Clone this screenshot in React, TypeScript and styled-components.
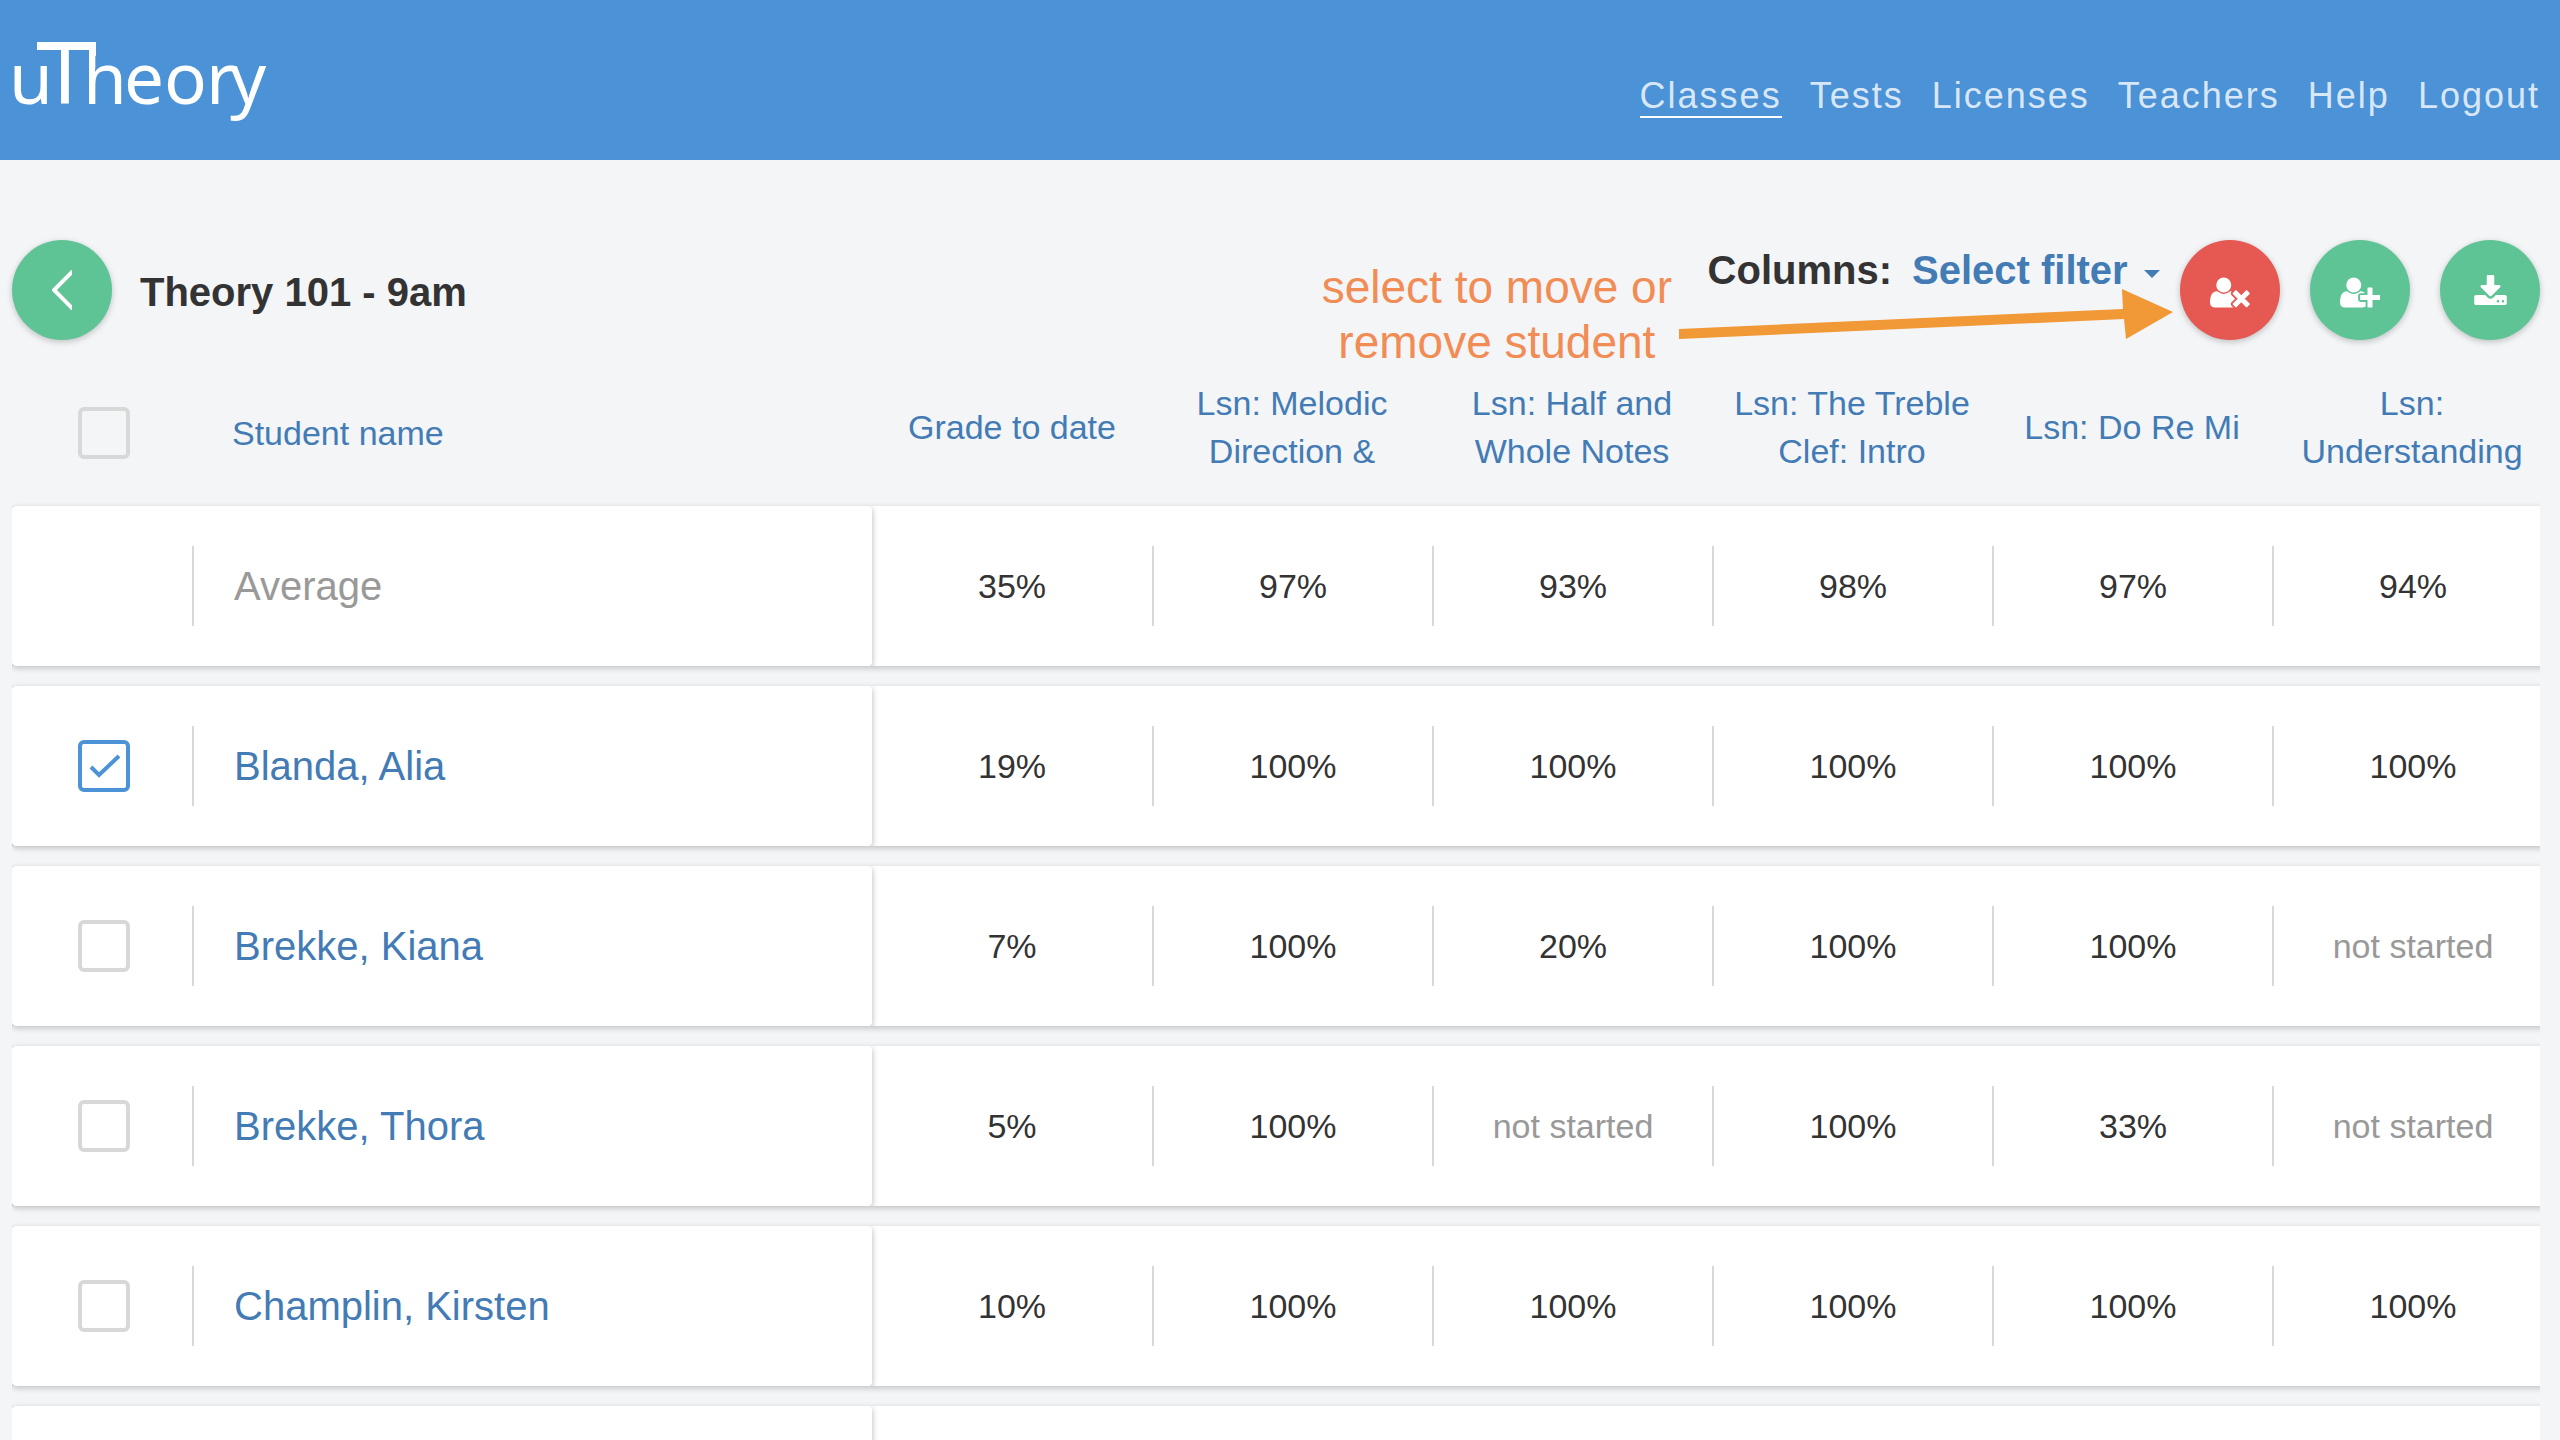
import React, { useState } from "react";
import styled, { createGlobalStyle, css } from "styled-components";

const blue = "#4b92d7";
const link = "#437bb5";
const ink = "#333333";
const muted = "#999999";
const green = "#5fc495";
const red = "#e65952";
const line = "#d8d8d8";

const GlobalStyle = createGlobalStyle`
  *, *::before, *::after { box-sizing: border-box; }
  body {
    margin: 0;
    background: #f3f5f7;
    color: ${ink};
    font-family: "Liberation Sans", Arial, sans-serif;
  }
  button, select, input { font: inherit; margin: 0; }
`;

const Page = styled.div`
  height: 100vh;
  overflow: hidden;
`;

const Header = styled.header`
  display: flex;
  justify-content: space-between;
  align-items: flex-end;
  height: 160px;
  padding: 0 20px 0 0;
  background: ${blue};
`;

const LogoLink = styled.a`
  display: block;
  height: 160px;
`;

const Nav = styled.nav`
  display: flex;
  gap: 28px;
  padding-bottom: 42px;
`;

const NavLink = styled.a<{ $active?: boolean }>`
  border-bottom: 2px solid ${(p) => (p.$active ? "#ffffff" : "transparent")};
  color: rgba(255, 255, 255, 0.8);
  font-size: 36px;
  line-height: 40px;
  letter-spacing: 2px;
  text-decoration: none;
`;

const Toolbar = styled.section`
  position: relative;
  display: flex;
  justify-content: space-between;
  margin-top: 80px;
  padding: 0 20px 0 12px;
`;

const TitleGroup = styled.div`
  display: flex;
  align-items: center;
  gap: 28px;
`;

const Title = styled.h1`
  margin: 0;
  padding-top: 4px;
  font-size: 40px;
  line-height: 60px;
`;

const Actions = styled.div`
  display: flex;
  align-items: flex-start;
  gap: 20px;
`;

const ButtonGroup = styled.div`
  display: flex;
  gap: 30px;
`;

const RoundButton = styled.button<{ $tone: string; $drop?: boolean }>`
  display: flex;
  align-items: center;
  justify-content: center;
  width: 100px;
  height: 100px;
  padding: ${(p) => (p.$drop ? "4px 0 0" : "0")};
  border: 0;
  border-radius: 50%;
  background: ${(p) => p.$tone};
  color: #ffffff;
  box-shadow: 0 2px 6px rgba(0, 0, 0, 0.22);
  cursor: pointer;
`;

const FilterLabel = styled.label`
  display: flex;
  align-items: center;
  gap: 20px;
  font-size: 40px;
  font-weight: bold;
  line-height: 60px;
`;

const FilterBox = styled.span`
  display: flex;
  align-items: center;
  gap: 16px;
`;

const FilterSelect = styled.select`
  appearance: none;
  height: 60px;
  padding: 0;
  border: 0;
  background: transparent;
  color: ${link};
  cursor: pointer;
`;

const Caret = styled.span`
  margin-top: 8px;
  border: 8px solid transparent;
  border-top-color: ${link};
  border-bottom: 0;
`;

const Note = styled.p`
  position: absolute;
  top: 20px;
  right: 888px;
  margin: 0;
  color: #f28c55;
  font-size: 46px;
  line-height: 55px;
  text-align: center;
`;

const Arrow = styled.svg`
  position: absolute;
  top: 48px;
  right: 386px;
`;

const TableScroller = styled.div`
  margin: 28px 20px 0 12px;
  overflow: hidden;
`;

const Table = styled.table`
  display: block;
`;

const TableHead = styled.thead`
  display: block;
`;

const TableBody = styled.tbody`
  display: flex;
  flex-direction: column;
  gap: 20px;
  padding: 20px 0;
`;

const columns = css`
  display: grid;
  grid-template-columns: 860px repeat(6, minmax(280px, 1fr));
`;

const HeadRow = styled.tr`
  ${columns}
  height: 118px;
`;

const Row = styled.tr`
  ${columns}
  height: 160px;
  min-width: 2540px;
  border-radius: 4px;
  background: #ffffff;
  box-shadow: 0 2px 6px rgba(0, 0, 0, 0.22);
`;

const HeadNameCell = styled.th`
  display: flex;
  align-items: center;
  padding: 12px 0 0;
  font-weight: normal;
`;

const HeadCell = styled.th`
  display: flex;
  align-items: center;
  justify-content: center;
  padding: 0 10px;
  font-weight: normal;
`;

const SortButton = styled.button`
  padding: 0;
  border: 0;
  background: none;
  color: ${link};
  font-size: 34px;
  line-height: 48px;
  text-align: center;
  cursor: pointer;
`;

const NameCell = styled.th`
  display: flex;
  align-items: center;
  padding: 0;
  border-radius: 4px;
  font-size: 40px;
  font-weight: normal;
  line-height: 60px;
  box-shadow: 0 2px 6px rgba(0, 0, 0, 0.3);
  clip-path: inset(0 -10px 0 0);
`;

const Slot = styled.span<{ $divided?: boolean }>`
  display: flex;
  align-items: center;
  width: ${(p) => (p.$divided ? "182px" : "180px")};
  height: 80px;
  margin-right: 40px;
  padding-left: 66px;
  border-right: ${(p) => (p.$divided ? `2px solid ${line}` : "0")};
`;

const StudentLink = styled.a`
  color: ${link};
  text-decoration: none;
`;

const AverageLabel = styled.span`
  color: ${muted};
`;

const Cell = styled.td<{ $muted?: boolean; $first?: boolean }>`
  display: flex;
  align-items: center;
  justify-content: center;
  height: 80px;
  margin: 40px 0;
  padding: 0;
  border-left: ${(p) => (p.$first ? "0" : `2px solid ${line}`)};
  color: ${(p) => (p.$muted ? muted : ink)};
  font-size: 34px;
`;

const CheckWrap = styled.span`
  position: relative;
  display: block;
  width: 52px;
  height: 52px;
`;

const CheckInput = styled.input`
  appearance: none;
  display: block;
  width: 52px;
  height: 52px;
  border: 4px solid ${line};
  border-radius: 6px;
  cursor: pointer;

  &:checked {
    border-color: ${blue};
  }
`;

const CheckMark = styled.svg`
  position: absolute;
  inset: 0;
  pointer-events: none;
`;

function Logo() {
  return (
    <svg width="280" height="160" viewBox="0 0 280 160" role="img" aria-label="uTheory">
      <g fill="#ffffff">
        <text y="104" fontFamily="'Noto Sans', 'Open Sans', sans-serif" fontSize="71">
          <tspan x="9">u</tspan>
          <tspan x="41" fontSize="86">T</tspan>
          <tspan x="83 124 164 206 230">heory</tspan>
        </text>
        <rect x="37" y="42" width="59" height="8" />
        <rect x="89" y="42" width="7" height="14" />
      </g>
    </svg>
  );
}

const personHead =
  "M704 896q-159 0-271.5-112.5t-112.5-271.5 112.5-271.5 271.5-112.5 271.5 112.5 112.5 271.5-112.5 271.5-271.5 112.5z";

function UserRemoveIcon() {
  return (
    <svg width="40" height="35" viewBox="0 0 2048 1792" fill="currentColor" aria-hidden="true">
      <path d={personHead} />
      <path d="M1781 1216l249 249q9 9 9 23 0 13-9 22l-136 136q-9 9-22 9-14 0-23-9l-249-249-249 249q-9 9-23 9-13 0-22-9l-136-136q-9-9-9-22 0-14 9-23l249-249-249-249q-9-9-9-23 0-13 9-22l136-136q9-9 22-9 14 0 23 9l249 249 249-249q9-9 23-9 13 0 22 9l136 136q9 9 9 22 0 14-9 23zm-498 0l-181 181q-37 37-37 91 0 53 37 90l83 83q-21 3-44 3h-874q-121 0-194-69t-73-190q0-53 3.500-103.500t14-109 26.500-108.500 43-97.500 62-81 85.500-53.500 111.500-20q19 0 39 17 154 122 319 122t320-122q20-17 39-17 28 0 57 6-28 27-41 50t-13 56q0 54 37 91z" />
    </svg>
  );
}

function UserAddIcon() {
  return (
    <svg width="40" height="35" viewBox="0 0 2048 1792" fill="currentColor" aria-hidden="true">
      <path d={personHead} />
      <path d="M1664 1024h352q13 0 22.500 9.500t9.500 22.500v192q0 13-9.500 22.500t-22.500 9.500h-352v352q0 13-9.500 22.500t-22.500 9.500h-192q-13 0-22.500-9.500t-9.500-22.500v-352h-352q-13 0-22.500-9.500t-9.500-22.500v-192q0-13 9.500-22.500t22.500-9.500h352v-352q0-13 9.500-22.500t22.500-9.500h192q13 0 22.500 9.500t9.500 22.500v352zm-736 224q0 52 38 90t90 38h256v238q-68 50-171 50h-874q-121 0-194-69t-73-190q0-53 3.500-103.500t14-109 26.500-108.500 43-97.500 62-81 85.500-53.500 111.500-20q19 0 39 17 79 61 154.500 91.500t164.500 30.500 164.500-30.500 154.500-91.500q20-17 39-17 132 0 217 96h-223q-52 0-90 38t-38 90v192z" />
    </svg>
  );
}

function DownloadIcon() {
  return (
    <svg width="35" height="35" viewBox="0 0 1792 1792" fill="currentColor" aria-hidden="true">
      <path d="M1344 1344q0-26-19-45t-45-19-45 19-19 45 19 45 45 19 45-19 19-45zm256 0q0-26-19-45t-45-19-45 19-19 45 19 45 45 19 45-19 19-45zm128-224v320q0 40-28 68t-68 28h-1472q-40 0-68-28t-28-68v-320q0-40 28-68t68-28h465l135 136q58 56 136 56t136-56l136-136h464q40 0 68 28t28 68zm-325-569q17 41-14 70l-448 448q-18 19-45 19t-45-19l-448-448q-31-29-14-70 17-39 59-39h256v-448q0-26 19-45t45-19h256q26 0 45 19t19 45v448h256q42 0 59 39z" />
    </svg>
  );
}

function Checkbox(props: { label: string; defaultChecked?: boolean }) {
  const [checked, setChecked] = useState(Boolean(props.defaultChecked));
  return (
    <CheckWrap>
      <CheckInput
        type="checkbox"
        aria-label={props.label}
        checked={checked}
        onChange={(e) => setChecked(e.target.checked)}
      />
      {checked && (
        <CheckMark width="52" height="52" viewBox="0 0 52 52" aria-hidden="true">
          <path d="M13 27 L21 35 L41 16" fill="none" stroke={blue} strokeWidth="4" />
        </CheckMark>
      )}
    </CheckWrap>
  );
}

const navItems = ["Classes", "Tests", "Licenses", "Teachers", "Help", "Logout"];

const headings = [
  "Grade to date",
  "Lsn: Melodic Direction &",
  "Lsn: Half and Whole Notes",
  "Lsn: The Treble Clef: Intro",
  "Lsn: Do Re Mi",
  "Lsn: Understanding",
];

const averages = ["35%", "97%", "93%", "98%", "97%", "94%"];

const students = [
  { name: "Blanda, Alia", selected: true, scores: ["19%", "100%", "100%", "100%", "100%", "100%"] },
  { name: "Brekke, Kiana", scores: ["7%", "100%", "20%", "100%", "100%", "not started"] },
  { name: "Brekke, Thora", scores: ["5%", "100%", "not started", "100%", "33%", "not started"] },
  { name: "Champlin, Kirsten", scores: ["10%", "100%", "100%", "100%", "100%", "100%"] },
];

function Scores({ values }: { values: string[] }) {
  return (
    <>
      {values.map((value, i) => (
        <Cell key={i} $first={i === 0} $muted={value === "not started"}>
          {value}
        </Cell>
      ))}
    </>
  );
}

export default function App() {
  return (
    <Page>
      <GlobalStyle />
      <Header>
        <LogoLink href="#">
          <Logo />
        </LogoLink>
        <Nav>
          {navItems.map((item) => (
            <NavLink key={item} href="#" $active={item === "Classes"}>
              {item}
            </NavLink>
          ))}
        </Nav>
      </Header>

      <main>
        <Toolbar>
          <TitleGroup>
            <RoundButton $tone={green} aria-label="Back">
              <svg width="20" height="40" viewBox="0 0 20 40" aria-hidden="true">
                <path d="M22 0 L2 20 L22 40" fill="none" stroke="#ffffff" strokeWidth="4" />
              </svg>
            </RoundButton>
            <Title>Theory 101 - 9am</Title>
          </TitleGroup>

          <Actions>
            <FilterLabel>
              Columns:
              <FilterBox>
                <FilterSelect>
                  <option>Select filter</option>
                </FilterSelect>
                <Caret />
              </FilterBox>
            </FilterLabel>
            <ButtonGroup>
              <RoundButton $tone={red} $drop aria-label="Move or remove student">
                <UserRemoveIcon />
              </RoundButton>
              <RoundButton $tone={green} $drop aria-label="Add student">
                <UserAddIcon />
              </RoundButton>
              <RoundButton $tone={green} $drop aria-label="Download">
                <DownloadIcon />
              </RoundButton>
            </ButtonGroup>
          </Actions>

          <Note>
            select to move or
            <br />
            remove student
          </Note>
          <Arrow width="496" height="52" viewBox="0 0 496 52" aria-hidden="true">
            <path d="M1 41 L445 21 L444 1 L495 24 L448 51 L446 31 L1 51 Z" fill="#f19837" />
          </Arrow>
        </Toolbar>

        <TableScroller>
          <Table>
            <TableHead>
              <HeadRow>
                <HeadNameCell scope="col">
                  <Slot>
                    <Checkbox label="Select all students" />
                  </Slot>
                  <SortButton>Student name</SortButton>
                </HeadNameCell>
                {headings.map((text) => (
                  <HeadCell key={text} scope="col">
                    <SortButton>{text}</SortButton>
                  </HeadCell>
                ))}
              </HeadRow>
            </TableHead>
            <TableBody>
              <Row>
                <NameCell scope="row">
                  <Slot $divided />
                  <AverageLabel>Average</AverageLabel>
                </NameCell>
                <Scores values={averages} />
              </Row>
              {students.map((s) => (
                <Row key={s.name}>
                  <NameCell scope="row">
                    <Slot $divided>
                      <Checkbox label={`Select ${s.name}`} defaultChecked={s.selected} />
                    </Slot>
                    <StudentLink href="#">{s.name}</StudentLink>
                  </NameCell>
                  <Scores values={s.scores} />
                </Row>
              ))}
              <Row>
                <NameCell as="td" />
              </Row>
            </TableBody>
          </Table>
        </TableScroller>
      </main>
    </Page>
  );
}
